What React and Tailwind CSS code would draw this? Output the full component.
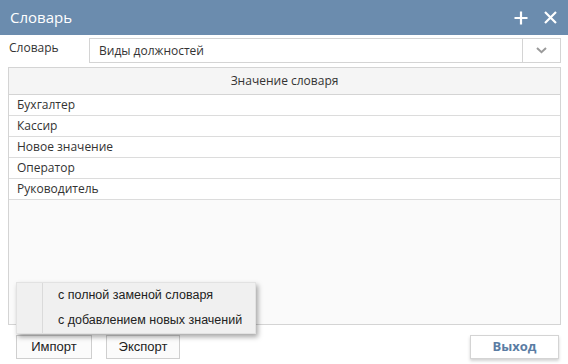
import React from "react";

const rows = ["Бухгалтер", "Кассир", "Новое значение", "Оператор", "Руководитель"];

const ui = { fontFamily: '"Open Sans", "Noto Sans", sans-serif' };
const arial = { fontFamily: '"Liberation Sans", Arial, sans-serif' };

export default function App() {
  return (
    <div className="relative w-[568px] h-[364px] bg-white flex flex-col overflow-hidden" style={ui}>
      {/* Title bar */}
      <div className="h-[35px] bg-[#6b8cae] flex items-center justify-between pl-[10px] pr-[11px]">
        <span className="text-white text-[15px]">Словарь</span>
        <div className="flex items-center gap-[16px]">
          <svg width="14" height="14" viewBox="0 0 14 14">
            <path d="M7 0.5V13.5M0.5 7H13.5" stroke="white" strokeWidth="2.2" />
          </svg>
          <svg width="13" height="13" viewBox="0 0 13 13">
            <path d="M1 1L12 12M12 1L1 12" stroke="white" strokeWidth="2.2" />
          </svg>
        </div>
      </div>

      {/* Dictionary selector */}
      <div className="flex items-center mt-[3px] pl-[9px] pr-[7px]">
        <span className="w-[80px] text-[12px] text-[#333] -mt-[6px]">Словарь</span>
        <div className="flex-1 h-[25px] border border-[#d4d4d4] flex items-center">
          <span className="flex-1 pl-[9px] text-[12px] text-[#333]">Виды должностей</span>
          <div className="w-[38px] h-full border-l border-[#d4d4d4] flex items-center justify-center">
            <svg width="11" height="7" viewBox="0 0 11 7">
              <path d="M1 1L5.5 5.2L10 1" stroke="#9a9a9a" strokeWidth="2" fill="none" />
            </svg>
          </div>
        </div>
      </div>

      {/* Grid */}
      <div className="mt-[4px] mx-[8px] mr-[7px] h-[258px] border border-[#d4d4d4] bg-[#fafafa] flex flex-col">
        <div className="h-[27px] bg-[#f5f5f5] border-b border-[#d4d4d4] flex items-center justify-center text-[12px] text-[#333]">
          Значение словаря
        </div>
        {rows.map((r) => (
          <div key={r} className="h-[21px] bg-white border-b border-[#dcdcdc] flex items-center pl-[8px] text-[12px] text-[#333]">
            {r}
          </div>
        ))}
      </div>

      {/* Bottom buttons */}
      <div className="flex items-start mt-[10px] pl-[16px] pr-[9px]" style={arial}>
        <button className="w-[76px] h-[24px] border border-[#cfcfcf] bg-[#fbfbfb] text-[13px] text-[#222]">Импорт</button>
        <button className="ml-[14px] w-[74px] h-[24px] border border-[#cfcfcf] bg-[#fbfbfb] text-[13px] text-[#222]">Экспорт</button>
        <button
          className="ml-auto w-[89px] h-[24px] border border-[#d4d4d4] bg-white text-[13px] font-bold text-[#5a7ca3] shadow-[0_2px_3px_rgba(0,0,0,0.18)]"
          style={ui}
        >
          Выход
        </button>
      </div>

      {/* Import menu */}
      <div
        className="absolute left-[16px] top-[282px] w-[240px] h-[52px] bg-[#f0f0f0] border border-[#e2e2e2] shadow-[2px_3px_5px_rgba(0,0,0,0.35)] flex"
        style={arial}
      >
        <div className="w-[26px] border-r border-[#dadada]" />
        <div className="flex-1 flex flex-col text-[12.5px] text-[#222]">
          <div className="h-[26px] flex items-center pl-[15px]">с полной заменой словаря</div>
          <div className="h-[26px] flex items-center pl-[15px]">с добавлением новых значений</div>
        </div>
      </div>
    </div>
  );
}
